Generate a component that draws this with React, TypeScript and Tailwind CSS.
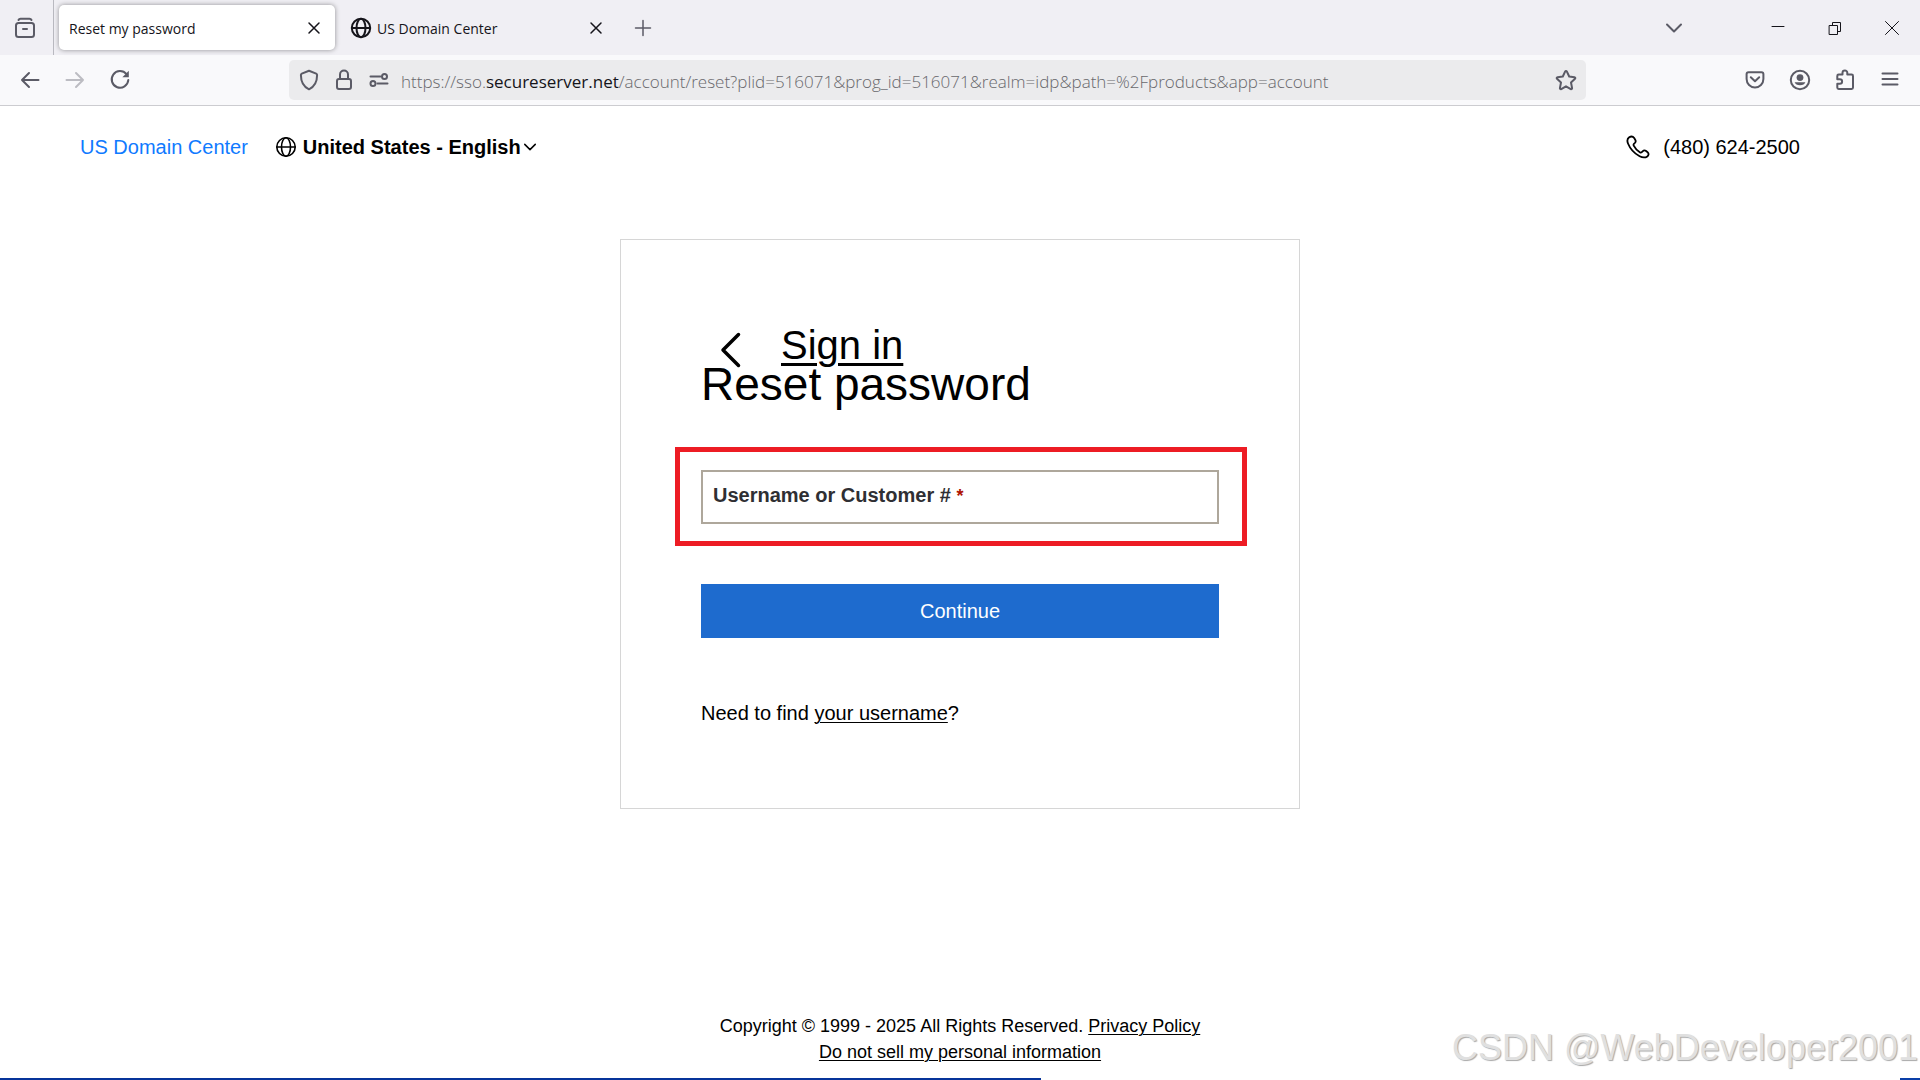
import { useState } from 'react';
import type { ReactNode } from 'react';

type IconName =
  | 'archive'
  | 'x'
  | 'globe'
  | 'plus'
  | 'chevronDown'
  | 'minimize'
  | 'restore'
  | 'close'
  | 'back'
  | 'forward'
  | 'reload'
  | 'shield'
  | 'lock'
  | 'permissions'
  | 'star'
  | 'pocket'
  | 'account'
  | 'extension'
  | 'menu'
  | 'phone';

// every glyph is drawn on a 24px grid at 1:1
const GLYPHS: Record<IconName, ReactNode> = {
  archive: (
    <>
      <path d="M5.500 4c.4-.9 1-1.300 2-1.300h9c1 0 1.600.4 2 1.300" />
      <rect x="3" y="7" width="18" height="14" rx="2.500" />
      <path d="M10 13h4" />
    </>
  ),
  x: <path d="M7 7l10 10M17 7l-10 10" />,
  globe: (
    <>
      <circle cx="12" cy="12" r="9.200" />
      <ellipse cx="12" cy="12" rx="4.500" ry="9.200" />
      <path d="M3 12h18" />
    </>
  ),
  plus: <path d="M12 4.500v15M4.500 12h15" />,
  chevronDown: <path d="M5 8.500l7 7 7-7" />,
  minimize: <path d="M6 10.500h12" />,
  restore: <path d="M6.500 9.500h8v9h-8zM9.500 9.500v-3h8v9h-3" />,
  close: <path d="M5.500 5.500l13 13M18.500 5.500l-13 13" />,
  back: <path d="M20.500 12H4M11 5l-7 7 7 7" />,
  forward: <path d="M3.500 12H20M13 5l7 7-7 7" />,
  reload: (
    <>
      <path d="M18.500 6.200A8.300 8.300 0 1 0 20.300 12" />
      <path d="M20.800 2.800v6.400h-6.400z" fill="currentColor" stroke="none" />
    </>
  ),
  shield: (
    <path d="M12 2.700l7.200 2.900c.6.3.9.700.9 1.400 0 6-2.100 11.500-8.100 14.300C6 18.500 3.900 13 3.900 7c0-.700.3-1.100.9-1.400z" />
  ),
  lock: (
    <>
      <rect x="5" y="11" width="14" height="10" rx="2" />
      <path d="M8 11V6.500a4 4 0 0 1 8 0V11" />
    </>
  ),
  permissions: (
    <>
      <path d="M3.500 8.500h10M10.500 15.500h10" />
      <circle cx="17.500" cy="8.500" r="2.500" />
      <circle cx="6" cy="15.500" r="2.500" />
    </>
  ),
  star: (
    <path d="M11.200 3.400a.9.9 0 0 1 1.600 0l2.400 5.100 5.300.700c.8.100 1.100 1 .5 1.600l-4 3.700 1.100 5.600c.100.800-.6 1.300-1.300 1L12 18.300l-4.800 2.800c-.700.3-1.400-.2-1.300-1L7 14.500l-4-3.700c-.6-.6-.3-1.500.5-1.600l5.300-.700z" />
  ),
  pocket: (
    <>
      <path d="M5.500 4.200h13c1.100 0 1.900.8 1.900 1.900v5a8.400 8.400 0 0 1-16.800 0v-5c0-1.100.8-1.900 1.900-1.900z" />
      <path d="M7.800 9.300L12 13.300l4.200-4" />
    </>
  ),
  account: (
    <>
      <circle cx="12" cy="12" r="9.200" />
      <circle cx="12" cy="9.600" r="3.400" fill="currentColor" stroke="none" />
      <path d="M6.600 14.300h10.800a5.600 4 0 0 1-10.800 0z" fill="currentColor" stroke="none" />
    </>
  ),
  extension: (
    <path d="M4.300 8.500V8c0-.8.6-1.400 1.400-1.400h3.800V4.800a2.400 2.400 0 0 1 4.800 0v1.800h4.300c.8 0 1.400.6 1.400 1.400v11.600c0 .8-.6 1.400-1.400 1.400H5.700c-.8 0-1.400-.6-1.400-1.400v-3.800h2.500a2.300 2.300 0 0 0 0-4.600H4.300z" />
  ),
  menu: <path d="M4.500 5.500h15M4.500 11h15M4.500 16.500h15" />,
  phone: (
    <path d="M3.200 2.300C1.400 3.600.9 5.800 2 8.500c2.200 5.400 6.400 10 11.600 12.700 3 1.600 5.700 1.600 7.700.2 1.500-1.100 1.700-3 .3-4.200l-1.500-1.200c-1.100-.9-2.500-.7-3.500.3l-.8.8c-.6.6-1.300.7-2 .2-2.600-1.700-4.700-4-6.100-6.700-.4-.8-.2-1.400.4-2l.6-.5c1-.9 1.200-2.300.5-3.400l-1-1.600c-1.100-1.600-3.200-2-5-.800z" />
  ),
};

function Icon({
  name,
  size = 24,
  strokeWidth = 2,
}: {
  name: IconName;
  size?: number;
  strokeWidth?: number;
}) {
  return (
    <svg
      width={size}
      height={size}
      viewBox="0 0 24 24"
      fill="none"
      stroke="currentColor"
      strokeWidth={strokeWidth}
      strokeLinecap="round"
      strokeLinejoin="round"
      aria-hidden="true"
      className="shrink-0"
    >
      {GLYPHS[name]}
    </svg>
  );
}

function ToolButton({ icon, label, disabled }: { icon: IconName; label: string; disabled?: boolean }) {
  return (
    <button
      type="button"
      aria-label={label}
      disabled={disabled}
      className="flex h-10 w-[45px] items-center justify-center text-[#5b5b66] disabled:text-[#bcbcc2]"
    >
      <Icon name={icon} />
    </button>
  );
}

function Tab({ title, active, icon }: { title: string; active?: boolean; icon?: IconName }) {
  return (
    <div
      role="tab"
      aria-selected={!!active}
      className={`flex h-[45px] w-[276px] items-center gap-1 pr-[9px] text-[14px] text-[#15141a] ${
        active ? 'rounded-[5px] bg-white pl-[10px] shadow-[0_0_5px_rgba(0,0,0,0.4)]' : 'pl-2'
      }`}
    >
      {icon && <Icon name={icon} />}
      <span className="min-w-0 flex-1 truncate pt-px">{title}</span>
      <button type="button" aria-label={`Close ${title}`}>
        <Icon name="x" strokeWidth={1.5} />
      </button>
    </div>
  );
}

function TabBar() {
  return (
    <div className="flex h-[55px] items-center bg-[#f0eff4] text-[#15141a]">
      <button
        type="button"
        aria-label="Recent browsing"
        className="flex h-full w-[54px] items-center border-r border-[#b9b9c0] pl-[13px] text-[#5b5b66]"
      >
        <Icon name="archive" />
      </button>
      <div role="tablist" className="flex gap-[6px] pl-[5px]">
        <Tab title="Reset my password" active />
        <Tab title="US Domain Center" icon="globe" />
      </div>
      <button type="button" aria-label="New tab" className="ml-[14px] text-[#5b5b66]">
        <Icon name="plus" strokeWidth={1.5} />
      </button>
      <button type="button" aria-label="List all tabs" className="mr-[63px] ml-auto text-[#5b5b66]">
        <Icon name="chevronDown" strokeWidth={2} />
      </button>
      <div className="flex">
        <button type="button" aria-label="Minimize" className="flex h-10 w-[57px] items-center justify-center">
          <Icon name="minimize" strokeWidth={1} />
        </button>
        <button type="button" aria-label="Restore" className="flex h-10 w-[57px] items-center justify-center">
          <Icon name="restore" strokeWidth={1} />
        </button>
        <button type="button" aria-label="Close window" className="flex h-10 w-[57px] items-center justify-center">
          <Icon name="close" strokeWidth={1} />
        </button>
      </div>
    </div>
  );
}

function NavBar() {
  return (
    <div className="flex items-center border-b border-[#ccccd0] bg-[#f9f9fb] py-[5px] pr-2 pl-[7px]">
      <ToolButton icon="back" label="Back" />
      <ToolButton icon="forward" label="Forward" disabled />
      <ToolButton icon="reload" label="Reload" />
      <div className="mr-[146px] ml-[147px] flex h-10 min-w-0 flex-1 items-center rounded-[5px] bg-[#ebebed] px-2 text-[#5b5b66]">
        <div className="flex items-center gap-[11px]">
          <Icon name="shield" />
          <Icon name="lock" />
          <Icon name="permissions" />
        </div>
        <div
          role="textbox"
          aria-label="Address"
          className="ml-[10px] min-w-0 flex-1 truncate pt-[3px] text-[17px] leading-6 font-light text-[#68686c]"
        >
          https://sso.<span className="font-normal text-[#15141a]">secureserver.net</span>
          /account/reset?plid=516071&amp;prog_id=516071&amp;realm=idp&amp;path=%2Fproducts&amp;app=account
        </div>
        <button type="button" aria-label="Bookmark this page">
          <Icon name="star" />
        </button>
      </div>
      <ToolButton icon="pocket" label="Save to Pocket" />
      <ToolButton icon="account" label="Account" />
      <ToolButton icon="extension" label="Extensions" />
      <ToolButton icon="menu" label="Application menu" />
    </div>
  );
}

function SiteHeader() {
  return (
    <header className="flex items-center pt-[26px] pr-[120px] pl-20 text-[20px] leading-[30px]">
      <a href="#home" className="text-[#0f7aff]">
        US Domain Center
      </a>
      <div className="ml-[26px] flex items-center">
        <Icon name="globe" strokeWidth={1.600} />
        <select
          aria-label="Country and language"
          defaultValue="us"
          className="ml-[5px] field-sizing-content appearance-none bg-transparent font-bold"
        >
          <option value="us">United States - English</option>
        </select>
        <Icon name="chevronDown" size={18} strokeWidth={2} />
      </div>
      <a href="tel:4806242500" className="ml-auto flex items-center gap-[13px]">
        <Icon name="phone" strokeWidth={1.800} />
        (480) 624-2500
      </a>
    </header>
  );
}

function ResetCard() {
  const [username, setUsername] = useState('');

  return (
    <form
      onSubmit={(e) => e.preventDefault()}
      className="mx-auto mt-[77px] w-full max-w-[680px] border border-[#d6d6d6] px-20 pt-[85px] pb-20"
    >
      <a href="#signin" className="flex h-10 items-end pl-[15px] text-[40px] leading-10">
        <svg width="65" height="40" viewBox="0 0 65 40" fill="none" overflow="visible" aria-hidden="true">
          <path
            d="M22.500 9.500L7 25l15.500 15.500"
            stroke="currentColor"
            strokeWidth="3.500"
            strokeLinecap="round"
            strokeLinejoin="round"
          />
        </svg>
        <span className="underline decoration-3 underline-offset-4">Sign in</span>
      </a>
      <h1 className="text-[46px] leading-[38px]">Reset password</h1>

      <div className="relative mt-[67px]">
        <div className="flex h-[54px] items-center border-2 border-[#aea79b] px-[10px] text-[20px]">
          <label htmlFor="username" className="pb-1 font-bold text-[#2f2f33]">
            Username or Customer # <span className="text-[18px] text-[#ae1302]">*</span>
          </label>
          <input
            id="username"
            type="text"
            required
            value={username}
            onChange={(e) => setUsername(e.target.value)}
            className="ml-2 min-w-0 flex-1 outline-none"
          />
        </div>
        {/* highlight frame around the field */}
        <div className="pointer-events-none absolute -top-[23px] -right-7 -bottom-[22px] -left-[26px] border-5 border-[#ed1c24]" />
      </div>

      <button type="submit" className="mt-[60px] h-[54px] w-full bg-[#1e6bce] text-[20px] text-white">
        Continue
      </button>

      <p className="mt-[60px] text-[20px] leading-[30px]">
        Need to find{' '}
        <a href="#username" className="underline decoration-1 underline-offset-2">
          your username
        </a>
        ?
      </p>
    </form>
  );
}

function Footer() {
  return (
    <footer className="mt-auto pt-10 pb-[13px] text-center text-[18px] leading-[26px]">
      <p>
        Copyright © 1999 - 2025 All Rights Reserved.{' '}
        <a href="#privacy" className="underline decoration-1 underline-offset-2">
          Privacy Policy
        </a>
      </p>
      <p>
        <a href="#do-not-sell" className="underline decoration-1 underline-offset-2">
          Do not sell my personal information
        </a>
      </p>
    </footer>
  );
}

export default function App() {
  return (
    <div className="relative flex min-h-screen flex-col bg-white font-['Liberation_Sans',Arial,sans-serif] text-black">
      <div className="font-['Open_Sans','Noto_Sans',sans-serif]">
        <TabBar />
        <NavBar />
      </div>
      <SiteHeader />
      <main>
        <ResetCard />
      </main>
      <Footer />
      <div className="flex h-[2px] justify-between">
        <div className="w-[54.2%] bg-[#07349a]" />
        <div className="w-5 bg-[#0a3fa8]" />
      </div>
      <div className="pointer-events-none absolute right-[2px] bottom-[8px] font-['Liberation_Sans',sans-serif] text-[36px] leading-12 text-[#e0e0e0] [text-shadow:1px_1px_1px_#a8a8a8]">
        CSDN @WebDeveloper2001
      </div>
    </div>
  );
}
